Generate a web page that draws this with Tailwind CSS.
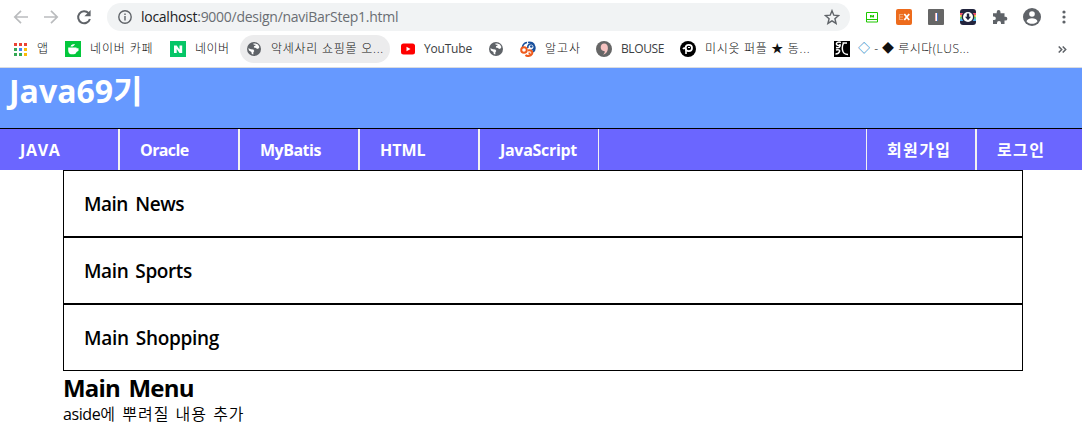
<!DOCTYPE html>
<html lang="ko">
<head>
<meta charset="utf-8">
<title>Java69기</title>
<script src="https://cdn.jsdelivr.net/npm/@tailwindcss/browser@4"></script>
</head>
<body class="h-[448px] overflow-hidden bg-white font-['Open_Sans','Noto_Sans_CJK_KR',sans-serif] text-black">
<svg class="hidden">
  <symbol id="globe" viewBox="0 0 14 14"><circle cx="7" cy="7" r="7" fill="#5f6368"/><path d="M1.300 6.200 4 7.200 6.400 7.500 7.300 9l-.9 1.200-.1 2.200-1.500-.3-.4-2L2 8.600zM6.300 1.600l2-.2 2.700 1.100 1.400 2.600-.8 1.500-1.600.3-.9-1-2.200-.4.100-1.200 1.600-.8-.2-.7-1.700-.1z" fill="#fff"/></symbol>
</svg>

<!-- browser toolbar -->
<div class="flex h-[34px] items-center pl-3 text-[#6a6e73]">
  <svg class="mr-4 size-4" viewBox="0 0 16 16" fill="none" stroke="#babcbe" stroke-width="1.700"><path d="M16 8H3M9 1.800 2.800 8 9 14.200"/></svg>
  <svg class="mr-4 size-4" viewBox="0 0 16 16" fill="none" stroke="#babcbe" stroke-width="1.700"><path d="M0 8h13M7 1.800 13.200 8 7 14.200"/></svg>
  <svg class="mr-[15px] size-4" viewBox="0 0 16 16"><path d="M12.600 4.200A6 6 0 1 0 13.900 10" fill="none" stroke="#5f6368" stroke-width="2"/><path d="M14.600 1v6.200H8.400z" fill="#5f6368"/></svg>
  <div class="flex h-7 w-[743px] items-center rounded-full bg-[#f1f3f4] pr-[10px] pl-[11px]">
    <svg class="mr-[9px] size-[14px]" viewBox="0 0 14 14"><circle cx="7" cy="7" r="6.200" fill="none" stroke="#5f6368" stroke-width="1.400"/><path d="M6.300 6h1.400v4.500H6.300zM6.300 3.500h1.400v1.400H6.300z" fill="#5f6368"/></svg>
    <span class="text-[14px] leading-5 tracking-[-0.27px] whitespace-nowrap"><span class="text-[#202124]">localhost</span>:9000/design/naviBarStep1.html</span>
    <svg class="ml-auto size-4" viewBox="0 0 16 16" fill="none" stroke="#5f6368" stroke-width="1.400"><path d="m8 1.700 1.800 4.500 4.800.4-3.700 3.100 1.200 4.700L8 11.800l-4.100 2.600 1.200-4.700-3.700-3.100 4.800-.4z"/></svg>
  </div>
  <svg class="ml-4 h-[11px] w-3" viewBox="0 0 12 11"><path d="M.5.500h11v9.500H.5zM1 7.500h10" fill="none" stroke="#1ec800"/><path d="M4 5.500V3h1.300l1.200 1.200V3H8v2.500H6.700L5.500 4.400v1.100z" fill="#1ec800"/></svg>
  <svg class="ml-[18px] size-4" viewBox="0 0 16 16"><rect width="16" height="16" rx="2" fill="#ed6b1c"/><path d="M3 5.500h4M3 8h4M3 10.500h4M3.500 5v6" stroke="#f5a673" stroke-width="1.200"/><path d="m8.300 5 4.900 6M13.200 5l-4.900 6" stroke="#fff" stroke-width="1.800"/></svg>
  <svg class="ml-4 size-4" viewBox="0 0 16 16"><rect width="16" height="16" rx="1" fill="#666"/><path d="M7.500 4v8" stroke="#f2b3b7"/><path d="M8.500 4v8" stroke="#fff"/><path d="M9.500 4v8" stroke="#4c72c2"/></svg>
  <svg class="ml-4 size-4" viewBox="0 0 16 16"><rect width="16" height="16" rx="3" fill="#22243d"/><path d="M0 4h16v2H0z" fill="#ef5270"/><path d="M0 6h16v2H0z" fill="#f5cf4f"/><path d="M0 8h16v2H0z" fill="#63cf8d"/><path d="M0 10h16v2H0z" fill="#4caeea"/><circle cx="8" cy="8" r="6.300" fill="#22243d"/><circle cx="8" cy="8" r="5" fill="#fff"/><path d="M6.800 4.500h2.400v3.300H11L8 11.300 5 7.800h1.800z" fill="#22243d"/></svg>
  <svg class="ml-4 size-4" viewBox="0 0 16 16"><path d="M1 4.200h3.700V3a1.900 1.900 0 0 1 3.800 0v1.200h4v3.600h1a1.800 1.800 0 0 1 0 3.700h-1v3.600H9v-1a2 2 0 0 0-4 0v1H1v-4h1a1.800 1.800 0 0 0 0-3.700H1z" fill="#5f6368"/></svg>
  <svg class="ml-[15px] size-[18px]" viewBox="0 0 18 18"><circle cx="9" cy="9" r="9" fill="#5f6368"/><circle cx="9" cy="6" r="2.800" fill="#fff"/><path d="M3.500 13.200C4.500 9.300 13.500 9.300 14.500 13.200 12 16.700 6 16.700 3.500 13.200z" fill="#fff"/></svg>
  <svg class="ml-[21px] h-[14px] w-1" viewBox="0 0 4 14" fill="#5f6368"><circle cx="2" cy="2" r="1.600"/><circle cx="2" cy="7" r="1.600"/><circle cx="2" cy="12" r="1.600"/></svg>
</div>

<!-- bookmarks bar -->
<div class="flex h-[34px] items-start border-b border-[#dadce0] pt-px pl-[14px] text-[12px] leading-[28px] whitespace-nowrap text-[#3c4043]">
  <div class="flex h-7 w-[51px] items-center">
    <svg class="mr-[10px] size-[13px]" viewBox="0 0 13 13"><path d="M0 0h3v3H0zM5 0h3v3H5zM10 0h3v3h-3z" fill="#ea4335"/><path d="M0 5h3v3H0zM0 10h3v3H0zM5 10h3v3H5z" fill="#34a853"/><path d="M5 5h3v3H5z" fill="#4285f4"/><path d="M10 5h3v3h-3zM10 10h3v3h-3z" fill="#fbbc05"/></svg>
    <span class="font-light text-[#111]">앱</span>
  </div>
  <div class="flex h-7 w-[105px] items-center">
    <svg class="mr-[9px] size-4" viewBox="0 0 16 16"><path d="M0 0h16v16H0z" fill="#03c73c"/><path d="M3.200 6.500h8.300v.8h2v2.500l-2 1.200c-.5 1.500-1.500 2.200-2.500 2.200H5.700C4 13 3.200 11 3.200 9z" fill="#fff"/><path d="M5.500 5.400c.5-1.800 2.500-2.500 4.400-2.500-.3 1.800-2 2.800-4.400 2.500z" fill="#fff"/></svg>
    <span class="font-light tracking-[0.85px] text-[#111]">네이버 카페</span>
  </div>
  <div class="flex h-7 w-[70px] items-center">
    <svg class="mr-[9px] size-4" viewBox="0 0 16 16"><path d="M0 0h16v16H0z" fill="#06c667"/><path d="M4 12V4.500h2.700L9.500 8.400V4.500h2.700V12H9.500L6.700 8.100V12z" fill="#fff"/></svg>
    <span class="font-light tracking-[0.5px] text-[#111]">네이버</span>
  </div>
  <div class="mr-[11px] flex h-7 w-[150px] items-center rounded-full bg-[#ececed] pl-[7px]">
    <svg class="mr-[10px] size-[14px]"><use href="#globe"/></svg>
    <span class="font-light tracking-[0.75px] text-[#111]">악세사리 쇼핑몰 오...</span>
  </div>
  <div class="flex h-7 w-[88px] items-center">
    <svg class="mr-[9px] h-3 w-[14px]" viewBox="0 0 14 12"><rect width="14" height="11" y=".5" rx="2.500" fill="#f00"/><path d="m5.500 3.700 4 2.300-4 2.300z" fill="#fff"/></svg>
    <span class="tracking-[-0.2px]">YouTube</span>
  </div>
  <div class="flex h-7 w-[31px] items-center"><svg class="size-[14px]"><use href="#globe"/></svg></div>
  <div class="flex h-7 w-[76px] items-center">
    <svg class="mr-[9px] size-4" viewBox="0 0 16 16" fill="none" stroke-width="2"><path d="M2.500 6A5.500 5.500 0 0 1 7 1.500M8 7a3.200 3.200 0 1 1 3.200 2.200M13 11A5.500 5.500 0 0 0 14.500 5 5 5 0 0 0 8 1.500" stroke="#184f9c" stroke-width="1.600"/><circle cx="11.300" cy="5.500" r="1.300" fill="#184f9c"/><circle cx="4" cy="9" r="2.800" stroke="#ee5a1c"/><path d="M8 9.500c3-1 5 1 4 3.500-1.500 2.500-5 2.500-6.500 1M8.500 12.500h2" stroke="#ee5a1c"/></svg>
    <span class="font-light tracking-[0.9px] text-[#111]">알고사</span>
  </div>
  <div class="flex h-7 w-[84px] items-center">
    <svg class="mr-[9px] size-4" viewBox="0 0 16 16"><circle cx="8" cy="8" r="8" fill="#666"/><path d="M8.200 2.500c2.300 0 3.700 1.700 3.700 4.500 0 3-1.700 6-4.700 6.700 1-1.200 1.600-2.300 1.600-3.500C6 10.300 4.700 8.700 4.700 6.300c0-2.400 1.400-3.800 3.500-3.800z" fill="#f7c3c1"/></svg>
    <span class="tracking-[-0.4px]">BLOUSE</span>
  </div>
  <div class="flex h-7 w-[154px] items-center">
    <svg class="mr-[9px] size-4" viewBox="0 0 16 16"><circle cx="8" cy="8" r="8"/><circle cx="8.800" cy="7" r="3.200" fill="none" stroke="#fff" stroke-width="1.800"/><path d="M6 13V8.500C6 7 4 6.500 3 8" fill="none" stroke="#fff" stroke-width="1.600"/><path d="M8 6.500h2" stroke="#fff"/></svg>
    <span class="font-light tracking-[0.7px] text-[#111]">미시옷 퍼플 ★ 동...</span>
  </div>
  <div class="flex h-7 items-center">
    <svg class="mr-2 size-4" viewBox="0 0 16 16" fill="none" stroke="#fff"><path d="M0 0h16v16H0z" fill="#000" stroke="none"/><path d="M7 1.500C4.500.5 2 1.500 2.500 3.200S6 5 6.200 3.200C6.500 6.500 4.500 7 2 6.500M2 9c2.500-.8 4 0 3.500 1.500S3 13 1.500 13M8.500 2H13M9.500 2c-1 2-1.500 4-1 7 .5 3.500 2.500 4.500 5.500 4.500" stroke-width="1.500"/></svg>
    <span class="font-light tracking-[0.5px] text-[#111]"><span class="font-normal text-[#1a7fc4]">◇</span> - ◆ 루시다(LUS...</span>
  </div>
  <svg class="mt-[11px] mr-[15px] ml-auto h-[7px] w-[9px]" viewBox="0 0 9 7" fill="none" stroke="#5f6368" stroke-width="1.500"><path d="m.7.500 3 3-3 3M4.700.500l3 3-3 3"/></svg>
</div>

<!-- page -->
<header class="h-[60px] bg-[#6699ff] pl-[9px]">
  <h1 class="pt-px text-[32px] leading-[43px] font-bold text-white">Java69기</h1>
</header>
<nav class="flex h-[42px] justify-between border-t border-black bg-[#6b66ff] text-[16px] leading-[43px] font-bold text-white">
  <ul class="flex">
    <li class="w-[120px] border-r-2 border-[#f2f2f2] pl-5 tracking-[0.7px]">JAVA</li>
    <li class="w-[120px] border-r-2 border-[#f2f2f2] pl-5 tracking-[-0.6px]">Oracle</li>
    <li class="w-[120px] border-r-2 border-[#f2f2f2] pl-5 tracking-[-0.5px]">MyBatis</li>
    <li class="w-[120px] border-r-2 border-[#f2f2f2] pl-5">HTML</li>
    <li class="w-[119px] border-r border-[#f2f2f2] pl-5 tracking-[-0.3px]">JavaScript</li>
  </ul>
  <ul class="flex">
    <li class="w-[109px] border-l border-[#f2f2f2] pl-5 tracking-[1.400px]">회원가입</li>
    <li class="w-[107px] border-l-2 border-[#f2f2f2] pl-5 tracking-[1.400px]">로그인</li>
  </ul>
</nav>
<main class="ml-[63px] w-[960px]">
  <section class="h-[67px] border border-black pl-5 text-[19px] leading-[66px] font-semibold tracking-[-0.5px] [word-spacing:3px]">Main News</section>
  <section class="h-[67px] border border-black pl-5 text-[19px] leading-[66px] font-semibold tracking-[-0.4px] [word-spacing:2.5px]">Main Sports</section>
  <section class="h-[67px] border border-black pl-5 text-[19px] leading-[66px] font-semibold tracking-[-0.3px] [word-spacing:2.5px]">Main Shopping</section>
  <aside>
    <h2 class="text-[24px] leading-[34px] font-bold tracking-[-0.8px] [word-spacing:3px]">Main Menu</h2>
    <p class="text-[16px] leading-[19px] font-[350] tracking-[1px] [word-spacing:1px]"><span class="font-normal tracking-[-0.4px]">aside</span>에 뿌려질 내용 추가</p>
  </aside>
</main>
</body>
</html>
